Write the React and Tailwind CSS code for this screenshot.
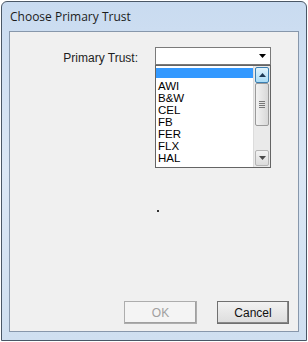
import React from "react";

const items = ["", "AWI", "B&W", "CEL", "FB", "FER", "FLX", "HAL"];

const ScrollBar = () => (
  <div className="w-[17px] flex flex-col bg-[#eaeaea] border-l border-[#dcdcdc]">
    <div className="h-[16px] shrink-0 mx-[1px] mt-[1px] rounded-[2px] border border-[#3c7fb1] bg-gradient-to-b from-[#e3f4fc] to-[#a9dbf6] flex items-center justify-center">
      <svg width="7" height="4" viewBox="0 0 7 4"><path d="M0 4 L3.5 0 L7 4 Z" fill="#1f3a55" /></svg>
    </div>
    <div className="h-[43px] shrink-0 mx-[1px] rounded-[2px] border border-[#9a9a9a] bg-gradient-to-r from-[#f2f2f2] to-[#d8d8d8] flex flex-col items-center justify-center gap-[1px]">
      <div className="w-[6px] h-[1px] bg-[#777]" />
      <div className="w-[6px] h-[1px] bg-[#777]" />
      <div className="w-[6px] h-[1px] bg-[#777]" />
      <div className="w-[6px] h-[1px] bg-[#777]" />
    </div>
    <div className="flex-1" />
    <div className="h-[16px] shrink-0 mx-[1px] mb-[1px] rounded-[2px] border border-[#b5b5b5] bg-gradient-to-b from-[#f3f3f3] to-[#dcdcdc] flex items-center justify-center">
      <svg width="7" height="4" viewBox="0 0 7 4"><path d="M0 0 L3.5 4 L7 0 Z" fill="#4a4a4a" /></svg>
    </div>
  </div>
);

const App = () => {
  return (
    <div className="w-[308px] h-[342px] bg-white p-[1px] font-['Liberation_Sans',Arial,sans-serif]">
      <div className="w-full h-full rounded-t-[6px] border border-[#4a5766] bg-gradient-to-b from-[#c9dbf0] via-[#dbe7f5] to-[#cfdff0] flex flex-col">
        <div className="h-[29px] pl-[8px] flex items-center text-[12px] text-[#1b1b1b] font-['Open_Sans',sans-serif]">
          Choose Primary Trust
        </div>
        <div className="flex-1 mx-[7px] mb-[8px] border border-[#8797ab] bg-[#f0f0f0] flex flex-col">
          <div className="flex pt-[15px]">
            <div className="w-[128px] text-right text-[12px] text-[#1e1e1e] pt-[2px]">Primary Trust:</div>
            <div className="ml-[17px] w-[116px] flex flex-col">
              <div className="h-[18px] border border-[#7a7a7a] bg-white flex justify-end">
                <div className="w-[16px] flex items-center justify-center">
                  <svg width="7" height="4" viewBox="0 0 7 4"><path d="M0 0 L3.5 4 L7 0 Z" fill="#000" /></svg>
                </div>
              </div>
              <div className="h-[103px] border border-[#646464] bg-white flex">
                <div className="flex-1 flex flex-col pt-[2px] text-[11.5px] leading-[12px] text-black overflow-hidden">
                  {items.map((it, i) => (
                    <div key={i} className={i === 0 ? "h-[10px] shrink-0 bg-[#3399ff] mb-[2px]" : "h-[12px] shrink-0 pl-[2px]"}>
                      {it}
                    </div>
                  ))}
                </div>
                <ScrollBar />
              </div>
            </div>
          </div>
          <div className="flex-1">
            <div className="w-[2px] h-[2px] bg-[#333] ml-[147px] mt-[42px]" />
          </div>
          <div className="flex justify-end gap-[20px] pr-[9px] pb-[7px]">
            <button className="w-[73px] h-[23px] border border-[#adadad] bg-[#f4f4f4] text-[12px] text-[#a0a0a0] shadow-[inset_-1px_-1px_0_#a0a0a0]">OK</button>
            <button className="w-[72px] h-[23px] border border-[#707070] bg-gradient-to-b from-[#f2f2f2] to-[#dddddd] text-[12px] text-[#111] shadow-[inset_-1px_-1px_0_#888]">Cancel</button>
          </div>
        </div>
      </div>
    </div>
  );
};

export default App;
